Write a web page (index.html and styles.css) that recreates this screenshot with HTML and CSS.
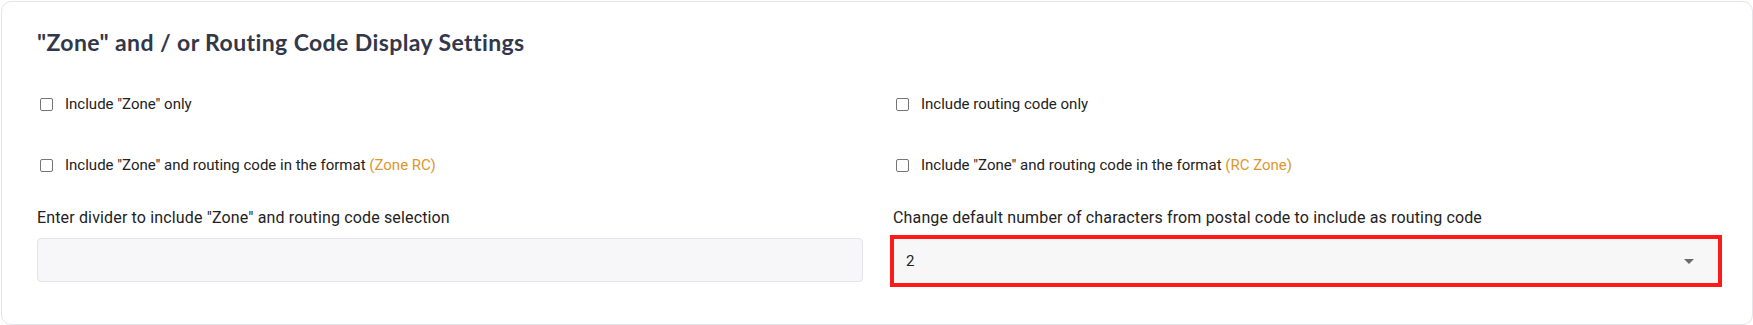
FILE: index.html
```html
<!DOCTYPE html>
<html lang="en">
<head>
    <meta charset="UTF-8">
    <meta name="viewport" content="width=device-width, initial-scale=1.0">
    <title>Zone and Routing Code Display Settings</title>
    <link rel="stylesheet" href="styles.css">
</head>
<body>

<div class="card">
    <h2 class="card-title">"Zone" and / or Routing Code Display Settings</h2>

    <div class="options">
        <label class="option">
            <input type="checkbox" class="check">
            <span>Include "Zone" only</span>
        </label>
        <label class="option">
            <input type="checkbox" class="check">
            <span>Include routing code only</span>
        </label>
        <label class="option">
            <input type="checkbox" class="check">
            <span>Include "Zone" and routing code in the format <em class="format">(Zone RC)</em></span>
        </label>
        <label class="option">
            <input type="checkbox" class="check">
            <span>Include "Zone" and routing code in the format <em class="format">(RC Zone)</em></span>
        </label>
    </div>

    <div class="fields">
        <div class="field">
            <label for="divider" class="field-label">Enter divider to include "Zone" and routing code selection</label>
            <input type="text" id="divider" class="text-input">
        </div>
        <div class="field">
            <label for="chars" class="field-label">Change default number of characters from postal code to include as routing code</label>
            <div class="select-wrap">
                <select id="chars" class="select-input">
                    <option>2</option>
                    <option>3</option>
                    <option>4</option>
                </select>
                <span class="caret"></span>
            </div>
        </div>
    </div>
</div>

</body>
</html>
```

FILE: styles.css
```css
body {
    margin: 0;
    padding: 1px 0 0 1px;
    background-color: #fff;
    font-family: Roboto, "Liberation Sans", sans-serif;
    color: #222;
}

.card {
    box-sizing: border-box;
    height: 324px;
    border: 1px solid #e4e4eb;
    border-radius: 10px;
    padding: 24px 33px 0 35px;
}

.card-title {
    margin: 0;
    font-family: Lato, "Open Sans", sans-serif;
    font-size: 23px;
    font-weight: 700;
    letter-spacing: 0.4px;
    color: #33374a;
    line-height: 32px;
}

.options {
    display: grid;
    grid-template-columns: 1fr 1fr;
    column-gap: 30px;
    row-gap: 31px;
    margin-top: 31px;
}

.option {
    display: flex;
    align-items: center;
    gap: 12px;
    padding-left: 3px;
    height: 30px;
    font-size: 15px;
    color: #222;
}

.check {
    appearance: none;
    margin: 0;
    width: 13px;
    height: 13px;
    border: 1.5px solid #767676;
    border-radius: 2px;
    box-sizing: border-box;
}

.format {
    font-style: normal;
    color: #e0962f;
}

.fields {
    display: grid;
    grid-template-columns: 1fr 1fr;
    column-gap: 30px;
    margin-top: 28px;
}

.field {
    display: flex;
    flex-direction: column;
}

.field-label {
    font-size: 16px;
    letter-spacing: 0.15px;
    line-height: 20px;
    color: #222;
    margin-bottom: 10px;
}

.text-input {
    box-sizing: border-box;
    height: 44px;
    border: 1px solid #e3e3ea;
    border-radius: 4px;
    background-color: #f7f7f9;
}

.select-wrap {
    position: relative;
}

.select-input {
    appearance: none;
    box-sizing: border-box;
    width: 100%;
    height: 46px;
    padding: 0 12px;
    border: 1px solid #d8d8d8;
    border-radius: 0;
    background-color: #f7f7f7;
    outline: 4px solid #ff1a1a;
    outline-offset: -1px;
    font-family: Roboto, "Liberation Sans", sans-serif;
    font-size: 15px;
    color: #222;
}

.caret {
    position: absolute;
    right: 25px;
    top: 21px;
    border-left: 5px solid transparent;
    border-right: 5px solid transparent;
    border-top: 5px solid #6b6b6b;
    pointer-events: none;
}
```
